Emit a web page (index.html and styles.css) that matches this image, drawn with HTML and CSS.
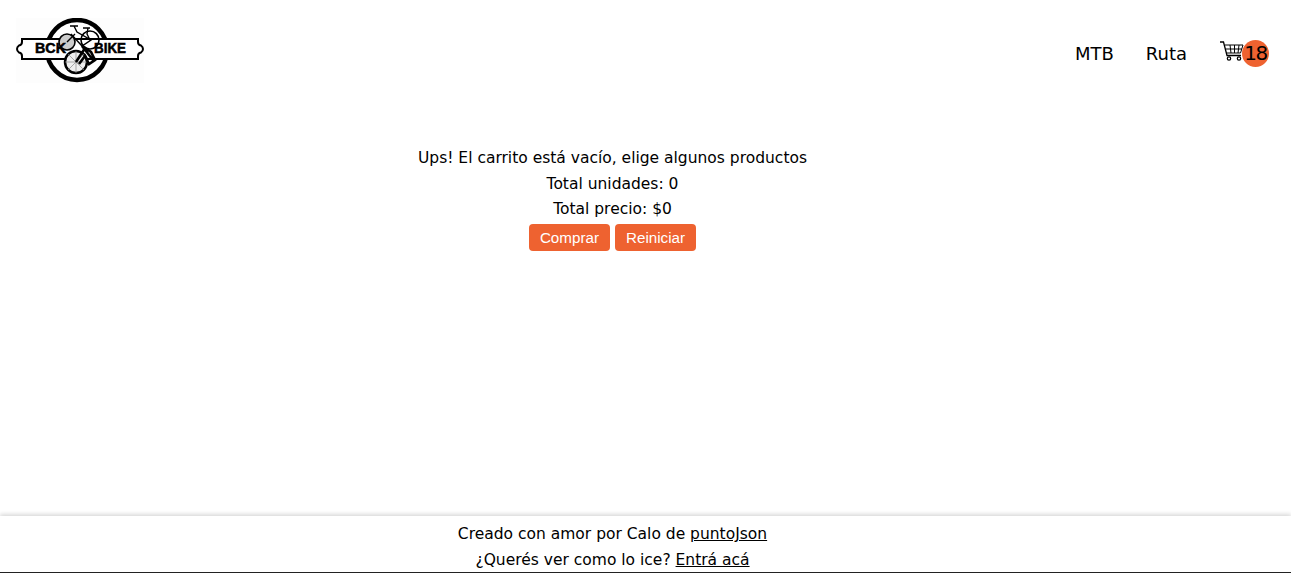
FILE: index.html
```html
<!DOCTYPE html>
<html lang="es">
<head>
  <meta charset="UTF-8" />
  <meta name="viewport" content="width=device-width, initial-scale=1.0" />
  <title>BCK Bike</title>
  <link rel="stylesheet" href="styles.css">
</head>
<body>
  <header class="navbar">
    <a class="logo" href="#">
      <svg width="128" height="65" viewBox="0 0 128 65">
        <rect width="128" height="65" fill="#fdfdfd"/>
        <circle cx="61" cy="32" r="30" fill="#fff" stroke="#000" stroke-width="4.500"/>
        <path d="M6 21H122v3q0 3 3 3.500 2 1.500 2 3.500t-2 3.500q-3 .5-3 3.500v3H6v-3q0-3-3-3.500-2-1.500-2-3.500t2-3.500q3-.5 3-3.500z" fill="#fff" stroke="#000" stroke-width="2"/>
        <circle cx="51" cy="24" r="8" fill="#ccc" stroke="#000" stroke-width="1.600"/>
        <circle cx="74" cy="22" r="9" fill="none" stroke="#000" stroke-width="1.600"/>
        <circle cx="60" cy="44" r="11" fill="#eee" stroke="#000" stroke-width="2.500"/>
        <path d="M60 33v22M49 44h22M52 36l16 16M52 52l16-16" stroke="#888" stroke-width=".7"/>
        <path d="M54 8h8M58 8l3 6 14 8-9 6-11-12M67 10h7M72 10l-1 6 3 6M51 24l8-8" fill="none" stroke="#000" stroke-width="1.400"/>
        <path d="M60 44l9-14 6 4 4 8-6 4-4-8-6 8M66 28l11 14" fill="none" stroke="#000" stroke-width="2.600"/>
        <text class="logo-text" x="19" y="35" textLength="31" lengthAdjust="spacingAndGlyphs">BCK</text>
        <text class="logo-text" x="78" y="35" textLength="32" lengthAdjust="spacingAndGlyphs">BIKE</text>
      </svg>
    </a>
    <nav class="nav-links">
      <a class="nav-link" href="#">MTB</a>
      <a class="nav-link" href="#">Ruta</a>
      <a class="cart" href="#">
        <svg class="cart-icon" width="24" height="20" viewBox="0 0 24 20">
          <path d="M0 1h3.500l3.500 13.500h14" fill="none" stroke="#000" stroke-width="1.300"/>
          <path d="M5 4h18l-2.500 8H7M5.800 8h16M10 4l1 8M14.500 4v8M19 4l-1 8" fill="none" stroke="#000" stroke-width="1"/>
          <circle cx="9" cy="17.500" r="1.700" fill="none" stroke="#000" stroke-width="1.200"/>
          <circle cx="19" cy="17.500" r="1.700" fill="none" stroke="#000" stroke-width="1.200"/>
        </svg>
        <span class="badge">18</span>
      </a>
    </nav>
  </header>

  <main class="cart-page">
    <p>Ups! El carrito está vacío, elige algunos productos</p>
    <p>Total unidades: 0</p>
    <p>Total precio: $0</p>
    <div class="actions">
      <button class="btn">Comprar</button>
      <button class="btn">Reiniciar</button>
    </div>
  </main>

  <footer class="footer">
    <p>Creado con amor por Calo de <a href="#">puntoJson</a></p>
    <p>¿Querés ver como lo ice? <a href="#">Entrá acá</a></p>
  </footer>
</body>
</html>
```

FILE: styles.css
```css
* {
  box-sizing: border-box;
}
html, body {
  height: 100%;
}
body {
  margin: 0;
  display: flex;
  flex-direction: column;
  font-family: "DejaVu Sans", sans-serif;
  font-size: 15.500px;
  line-height: 25.600px;
  color: #000;
  background: #fff;
}
p {
  margin: 0;
}
a {
  color: #000;
}
.navbar {
  display: flex;
  justify-content: space-between;
  align-items: flex-start;
  height: 146px;
  padding: 18px 22px 0 16px;
}
.logo {
  display: block;
  height: 65px;
}
.logo svg {
  display: block;
}
.logo-text {
  font-family: "Liberation Sans", Arial, sans-serif;
  font-size: 14px;
  font-weight: bold;
  stroke: #000;
  stroke-width: .5px;
}
.nav-links {
  display: flex;
  align-items: center;
  gap: 32px;
  padding-top: 22px;
  font-size: 18px;
}
.nav-link {
  text-decoration: none;
}
.cart {
  display: flex;
  align-items: center;
  text-decoration: none;
}
.cart-icon {
  margin-top: -6px;
  margin-left: 1px;
}
.badge {
  width: 27px;
  height: 27px;
  margin-left: -2px;
  border-radius: 50%;
  background: #ee6230;
  font-size: 20px;
  letter-spacing: -1.500px;
  text-align: center;
  line-height: 27px;
}
.cart-page {
  flex: 1;
  width: 1225px;
  text-align: center;
}
.actions {
  display: flex;
  justify-content: center;
  gap: 5px;
  margin-top: 1px;
}
.btn {
  height: 27px;
  padding: 0 11px;
  border: 0;
  border-radius: 4px;
  background: #ee6230;
  color: #fff;
  font-family: "Liberation Sans", Arial, sans-serif;
  font-size: 15.200px;
}
.footer {
  height: 57px;
  width: 100%;
  padding-top: 6px;
  padding-right: 66px;
  border-bottom: 1px solid #222;
  box-shadow: 0 -2px 4px rgba(0, 0, 0, .15);
  text-align: center;
}
```
